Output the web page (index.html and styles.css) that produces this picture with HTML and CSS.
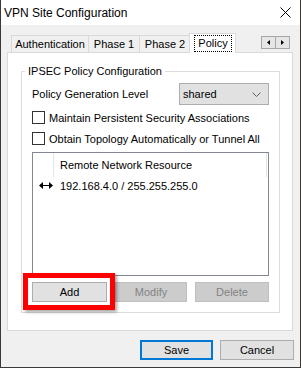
FILE: index.html
```html
<!DOCTYPE html>
<html>
<head>
<title>VPN Site Configuration</title>
<link rel="stylesheet" href="styles.css">
</head>
<body>
<div class="window">
	<div class="titlebar">
		<span class="title">VPN Site Configuration</span>
		<svg class="close" width="11" height="11" viewBox="0 0 11 11"><path d="M0.5 0.5 L10.5 10.5 M10.5 0.5 L0.5 10.5" stroke="#000" stroke-width="1"/></svg>
	</div>

	<div class="tabbar">
		<div class="tabs">
			<div class="tab tab-auth">Authentication</div>
			<div class="tab tab-p1">Phase 1</div>
			<div class="tab tab-p2">Phase 2</div>
			<div class="tab active"><span class="focus">Policy</span></div>
		</div>
		<div class="scroller">
			<div class="arrow"><svg width="3" height="5" viewBox="0 0 3 5"><path d="M3 0 L0 2.5 L3 5 Z" fill="#000"/></svg></div>
			<div class="arrow"><svg width="3" height="5" viewBox="0 0 3 5"><path d="M0 0 L3 2.5 L0 5 Z" fill="#000"/></svg></div>
		</div>
	</div>

	<div class="panel">
		<fieldset class="group">
			<legend>IPSEC Policy Configuration</legend>
			<div class="group-body">
				<div class="row">
					<span>Policy Generation Level</span>
					<div class="select">
						<span>shared</span>
						<svg width="9" height="5" viewBox="0 0 9 5"><path d="M0.5 0.5 L4.5 4.5 L8.5 0.5" fill="none" stroke="#606060" stroke-width="1"/></svg>
					</div>
				</div>
				<div class="check"><span class="box"></span>Maintain Persistent Security Associations</div>
				<div class="check second"><span class="box"></span>Obtain Topology Automatically or Tunnel All</div>

				<div class="list">
					<div class="list-head">
						<span class="col-icon"></span>
						<span class="col-name">Remote Network Resource</span>
					</div>
					<div class="list-row">
						<span class="col-icon">
							<svg width="14" height="7" viewBox="0 0 14 7"><path d="M3 3 H11 V4 H3 Z" fill="#000"/><path d="M0 3.5 L4 0 L4 7 Z M14 3.5 L10 0 L10 7 Z" fill="#000"/></svg>
						</span>
						<span class="row-text">192.168.4.0 / 255.255.255.0</span>
					</div>
				</div>

				<div class="buttons">
					<button class="btn btn-add">Add</button>
					<button class="btn btn-modify" disabled>Modify</button>
					<button class="btn btn-delete" disabled>Delete</button>
					<div class="highlight"></div>
				</div>
			</div>
		</fieldset>
	</div>

	<div class="footer">
		<button class="btn btn-save">Save</button>
		<button class="btn btn-cancel">Cancel</button>
	</div>
</div>
</body>
</html>
```

FILE: styles.css
```css
* {
	box-sizing: border-box;
}

body {
	margin: 0;
	background: #f0f0f0;
	font-family: "Liberation Sans", Arial, sans-serif;
	font-size: 11px;
	color: #000;
}

.window {
	width: 301px;
	height: 368px;
	border: 1px solid #3c3835;
	border-top: none;
	background: #f0f0f0;
}

.titlebar {
	height: 25px;
	background: #fff;
	display: flex;
	align-items: center;
	padding-left: 3px;
}

.title {
	flex: 1;
	font-size: 12px;
}

.close {
	margin-right: 9px;
}

/* tab strip */
.tabbar {
	height: 27px;
	display: flex;
	align-items: flex-end;
	padding-left: 10px;
}

.tabs {
	display: flex;
	align-items: flex-end;
}

.tab {
	height: 17px;
	line-height: 16px;
	text-align: center;
	border: 1px solid #d9d9d9;
	border-bottom: none;
	background: #f0f0f0;
	margin-left: -1px;
}

.tab-auth {
	width: 78px;
	margin-left: 0;
}

.tab-p1,
.tab-p2 {
	width: 52px;
}

.tab.active {
	width: 47px;
	height: 20px;
	margin-left: -2px;
	margin-bottom: -1px;
	background: #fff;
	position: relative;
	z-index: 1;
}

.focus {
	display: block;
	height: 17px;
	line-height: 15px;
	margin: 1px 3px 0 4px;
	border: 1px dotted #000;
}

.scroller {
	display: flex;
	margin-left: auto;
	margin-right: 10px;
	align-self: flex-start;
	margin-top: 11px;
}

.arrow {
	width: 15px;
	height: 13px;
	border: 1px solid #a6a6a6;
	background: #e6e6e6;
	display: flex;
	align-items: center;
	justify-content: center;
}

.arrow + .arrow {
	margin-left: -1px;
}

/* tab page */
.panel {
	height: 279px;
	margin: 0 7px 0 6px;
	border: 1px solid #d9d9d9;
	background: #fff;
	padding: 0 12px 0 13px;
}

.group {
	margin: 12px 0 0;
	padding: 0;
	border: 1px solid #dcdcdc;
	min-width: 0;
}

.group legend {
	margin-left: 3px;
	padding: 0 3px;
	line-height: 13px;
}

.group-body {
	padding: 5px 10px 10px 10px;
}

.row {
	height: 22px;
	display: flex;
	align-items: center;
	justify-content: space-between;
}

.select {
	width: 90px;
	height: 22px;
	border: 1px solid #adadad;
	background: #e1e1e1;
	display: flex;
	align-items: center;
	justify-content: space-between;
	padding: 0 7px 0 3px;
}

.check {
	display: flex;
	align-items: center;
	height: 13px;
	margin-top: 6px;
}

.check.second {
	margin-top: 8px;
}

.box {
	width: 13px;
	height: 13px;
	border: 1px solid #333;
	background: #fff;
	margin-right: 4px;
}

/* list view */
.list {
	margin-top: 7px;
	height: 124px;
	border: 1px solid #828790;
	background: #fff;
}

.list-head {
	display: flex;
	height: 24px;
}

.list-head .col-icon {
	border-right: 1px solid #e5e5e5;
}

.col-icon {
	width: 21px;
	flex-shrink: 0;
	display: flex;
	align-items: center;
	padding-left: 6px;
}

.col-name {
	flex: 1;
	margin-right: 1px;
	border-right: 1px solid #e5e5e5;
	padding-left: 6px;
	line-height: 24px;
}

.list-row {
	display: flex;
	height: 17px;
	align-items: center;
}

.row-text {
	padding-left: 6px;
}

/* buttons */
.buttons {
	display: flex;
	margin-top: 6px;
	position: relative;
}

.btn {
	height: 20px;
	margin: 0;
	padding: 0;
	border: 1px solid #adadad;
	background: #e1e1e1;
	font-family: "Liberation Sans", Arial, sans-serif;
	font-size: 11px;
	color: #000;
}

.btn:disabled {
	background: #cccccc;
	border-color: #bfbfbf;
	color: #838383;
}

.btn-add {
	width: 75px;
}

.btn-modify {
	width: 72px;
	margin-left: 8px;
}

.btn-delete {
	width: 74px;
	margin-left: 8px;
}

.highlight {
	position: absolute;
	left: -9px;
	top: -9px;
	width: 92px;
	height: 37px;
	border: 5px solid #ff0000;
	box-shadow: 2px 2px 3px rgba(0, 0, 0, 0.35);
}

.footer {
	display: flex;
	justify-content: flex-end;
	margin-top: 9px;
	padding-right: 6px;
}

.btn-save {
	width: 73px;
	border: 2px solid #0078d7;
}

.btn-cancel {
	width: 74px;
	margin-left: 7px;
}
```
